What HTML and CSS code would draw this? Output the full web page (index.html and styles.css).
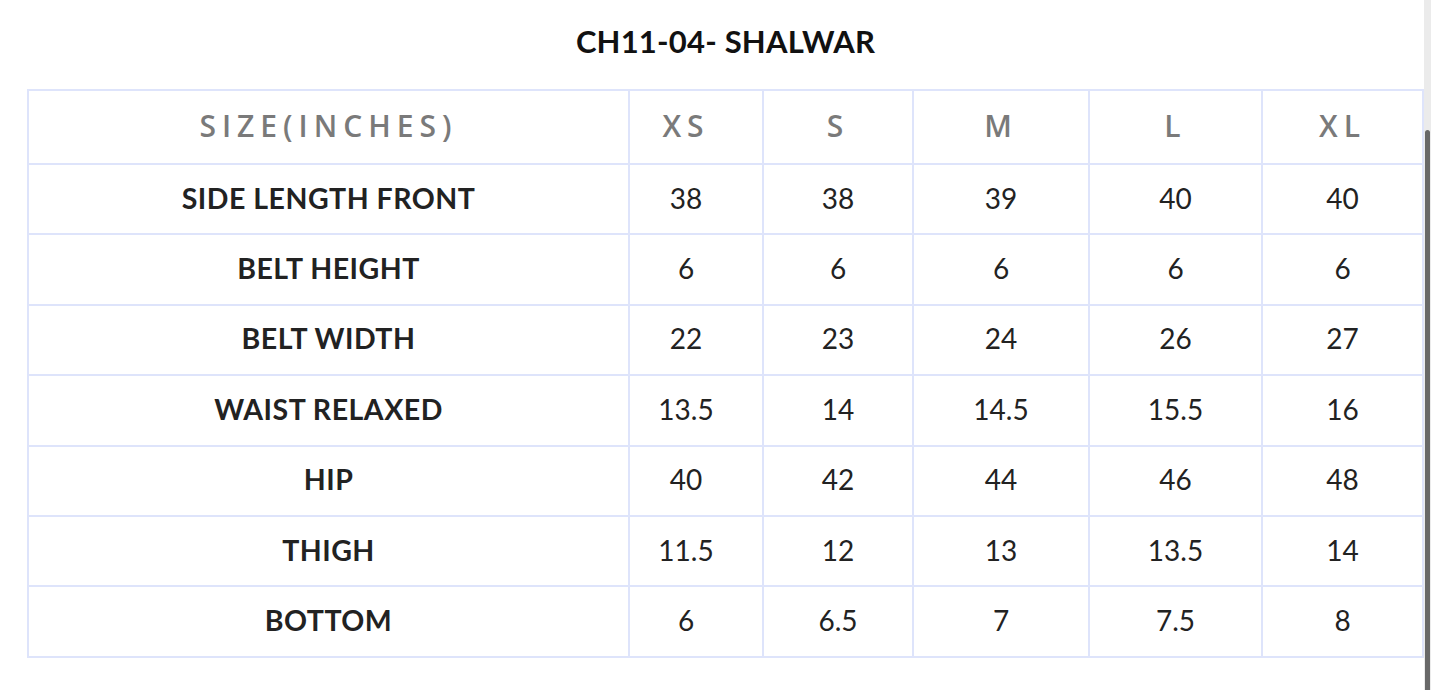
FILE: index.html
```html
<!DOCTYPE html>
<html lang="en">
<head>
<meta charset="utf-8">
<title>CH11-04- SHALWAR</title>
<link rel="stylesheet" href="styles.css">
</head>
<body>
<main class="sheet">
  <h1 class="title">CH11-04- SHALWAR</h1>
  <table class="chart">
    <thead>
      <tr><th class="c0">SIZE(INCHES)</th><th class="c1">XS</th><th class="c2">S</th><th class="c3">M</th><th class="c4">L</th><th class="c5">XL</th></tr>
    </thead>
    <tbody>
      <tr><td class="label">SIDE LENGTH FRONT</td><td class="xs">38</td><td>38</td><td>39</td><td>40</td><td>40</td></tr>
      <tr><td class="label">BELT HEIGHT</td><td class="xs">6</td><td>6</td><td>6</td><td>6</td><td>6</td></tr>
      <tr><td class="label">BELT WIDTH</td><td class="xs">22</td><td>23</td><td>24</td><td>26</td><td>27</td></tr>
      <tr><td class="label">WAIST RELAXED</td><td class="xs">13.5</td><td>14</td><td>14.5</td><td>15.5</td><td>16</td></tr>
      <tr><td class="label">HIP</td><td class="xs">40</td><td>42</td><td>44</td><td>46</td><td>48</td></tr>
      <tr><td class="label">THIGH</td><td class="xs">11.5</td><td>12</td><td>13</td><td>13.5</td><td>14</td></tr>
      <tr><td class="label">BOTTOM</td><td class="xs">6</td><td>6.5</td><td>7</td><td>7.5</td><td>8</td></tr>
    </tbody>
  </table>
</main>
<div class="scrollbar"><div class="thumb"></div></div>
</body>
</html>
```

FILE: styles.css
```css
html, body {
  margin: 0;
  padding: 0;
  background: #ffffff;
}
body {
  width: 1445px;
  height: 690px;
  overflow: hidden;
  position: relative;
  font-family: "Lato", "Liberation Sans", sans-serif;
  color: #222222;
}
.sheet {
  display: flex;
  flex-direction: column;
  align-items: flex-start;
  width: 1397px;
  margin-left: 27px;
}
.title {
  align-self: stretch;
  margin: 21px 0 28px 0;
  height: 40px;
  line-height: 40px;
  text-align: center;
  font-family: "Lato", "Liberation Sans", sans-serif;
  font-weight: 700;
  font-size: 31px;
  color: #111111;
  letter-spacing: 0.2px;
}
.chart {
  border-collapse: separate;
  border-spacing: 0;
  table-layout: fixed;
  border-top: 2px solid #dee4fb;
  border-left: 2px solid #dee4fb;
}
.chart th, .chart td {
  box-sizing: border-box;
  border-right: 2px solid #dee4fb;
  border-bottom: 2px solid #dee4fb;
  text-align: center;
  vertical-align: middle;
  padding: 0 0 3px 0;
}
.chart th {
  height: 74px;
  font-family: "Open Sans", "Liberation Sans", sans-serif;
  font-weight: 600;
  font-size: 30px;
  letter-spacing: 6px;
  color: #7a7a7a;
}
.chart th.c1, .chart td.xs {
  padding-right: 20px;
}
.chart td {
  height: 70.4px;
  font-size: 28px;
  font-weight: 400;
  color: #222222;
}
.chart td.label {
  font-size: 28.5px;
  font-weight: 700;
  letter-spacing: 0.5px;
  color: #222222;
}
.c0 { width: 601px; }
.c1 { width: 134px; }
.c2 { width: 150px; }
.c3 { width: 176px; }
.c4 { width: 173px; }
.c5 { width: 161px; }
.scrollbar {
  position: absolute;
  top: 0;
  left: 1424px;
  width: 7px;
  height: 690px;
  background: #ebebeb;
}
.thumb {
  position: absolute;
  top: 130px;
  left: 1px;
  width: 5px;
  height: 560px;
  background: #686868;
  border-radius: 3px 3px 0 0;
}
```
